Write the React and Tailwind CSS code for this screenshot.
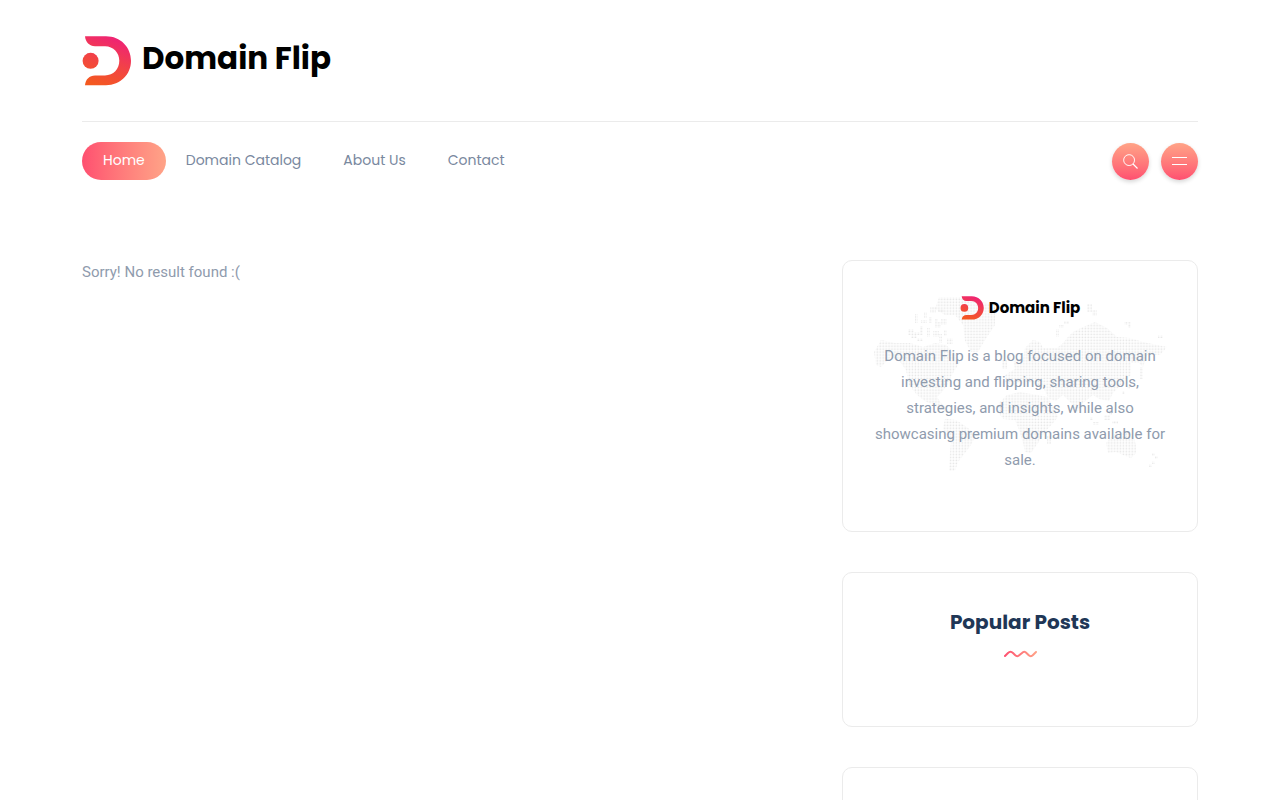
import React, { useId } from "react";

const navItems = ["Home", "Domain Catalog", "About Us", "Contact"];

function LogoMark({ className }) {
  const id = useId();
  return (
    <svg viewBox="0 0 49 50" className={className} aria-hidden="true">
      <defs>
        <linearGradient id={id} gradientUnits="userSpaceOnUse" x1="30" y1="2" x2="12" y2="49">
          <stop offset="0" stopColor="#ef2572" />
          <stop offset="0.5" stopColor="#f24444" />
          <stop offset="1" stopColor="#f4591f" />
        </linearGradient>
      </defs>
      <g fill={`url(#${id})`}>
        <circle cx="8.600" cy="24.800" r="8" />
        <path d="M3 .3H24C38.500 .3 49 11.300 49 24.800S38.500 49.200 24 49.200H3C3.500 43.200 7.500 39.400 13 39.400H23C31.500 39.400 37.300 33 37.300 24.800S31.500 10.200 23 10.200H13C7.500 10.200 3.500 6.300 3 .3Z" />
      </g>
    </svg>
  );
}

function WorldMap({ className }) {
  const id = useId();
  return (
    <svg viewBox="0 0 294 178" className={className} aria-hidden="true">
      <defs>
        <pattern id={id} width="2.930" height="2.930" patternUnits="userSpaceOnUse">
          <rect width="1.600" height="1.600" x=".6" y=".6" fill="#e6e6e6" />
        </pattern>
      </defs>
      <g fill={`url(#${id})`}>
        <path d="M1 57 8 45 22 48 37 48 50 52 62 48 73 50 82 58 87 67 80 78 73 92 68 98 64 102 68 108 74 113 72 116 52 106 44 100 36 90 33 75 28 68 18 62 8 72 3 70Z" />
        <path d="M35 34h6v3h6v-6h3v9h-6v3h-6v-3h-3ZM42 19h3v9h-3ZM51 17h3v6h-3ZM48 25h6v3h-6ZM56 22h3v6h-3ZM62 24h3v3h3v-3h6v6h-6v3h-6ZM54 33h3v9h-3ZM60 36h6v3h3v9h-3v-6h-6ZM71 35h3v6h-3ZM44 43h6v3h-6ZM74 43h6v6h-6ZM57 12h6v6h-6ZM65 14h6v3h-6Z" />
        <path d="M66 2H88L122 10 122 30 112 45 105 57 98 57 92 46 90 30 82 20 72 20 62 14Z" />
        <path d="M72 124 83 125 95 133 103 140 98 150 92 158 85 167 82 176 76 176 77 157 78 148 72 140 70 133Z" />
        <path d="M147 97 175 102 185 122 180 128 172 137 165 148 158 158 152 157 150 148 146 135 142 125 130 124 125 117 126 108 134 100ZM174 141h4v8h-4Z" />
        <path d="M152 53 160 45 167 47 170 53 184 53 190 48 194 43 200 37 210 32 222 27 234 33 244 42 257 43 270 47 294 52 287 60 274 60 270 72 266 68 258 68 258 80 248 90 240 98 236 106 226 104 220 100 210 108 204 118 198 108 190 100 183 106 176 104 170 92 160 88 150 86 140 90 132 88 132 80 142 74 140 66 150 64Z" />
        <path d="M233 148 240 140 252 136 260 140 263 150 263 158 258 163 250 160 243 157 235 158Z" />
        <path d="M183 34h3v8h-3ZM186 30h5v3h-5ZM191 26h5v3h-5ZM146 12h9v3h-9ZM149 15h6v3h-6ZM214 9h5v8h-5ZM219 15h5v6h-5ZM251 27h7v3h-7ZM255 30h3v3h-3ZM285 40h5v3h-5ZM217 122h3v3h-3ZM220 127h6v3h-6ZM231 120h6v5h-6ZM239 126h6v3h-6ZM236 115h3v5h-3ZM249 96h3v3h-3ZM254 91h3v3h-3ZM279 158h3v3h-3ZM282 161h3v3h-3ZM279 166h3v3h-3ZM276 169h3v3h-3ZM267 72h3v12h-3ZM129 65h5v9h-5ZM135 60h3v6h-3Z" />
      </g>
    </svg>
  );
}

function Squiggle() {
  return (
    <svg viewBox="0 0 33 6" className="h-[6px] w-[33px] overflow-visible" aria-hidden="true">
      <defs>
        <linearGradient id="squiggle" gradientUnits="userSpaceOnUse" x1="0" y1="0" x2="33" y2="0">
          <stop offset="0" stopColor="#fe4f70" />
          <stop offset="1" stopColor="#ffa387" />
        </linearGradient>
      </defs>
      <path
        d="M1 5 4 2Q6.500 -.5 9 2L11 4Q13.300 6.300 15.500 4L18 2Q20.300 -.5 22.500 2L24.500 4Q26.800 6.300 29 4L32 1"
        fill="none"
        stroke="url(#squiggle)"
        strokeWidth="2"
        strokeLinecap="round"
      />
    </svg>
  );
}

function RoundButton({ label, children }) {
  return (
    <button
      type="button"
      aria-label={label}
      className="flex size-[37px] items-center justify-center rounded-full bg-linear-to-t from-[#fe4f70] to-[#ffa387] text-white shadow-[0_2px_4px_rgba(0,0,0,0.16)]"
    >
      {children}
    </button>
  );
}

export default function App() {
  return (
    <div className="min-h-screen bg-white font-['Roboto',sans-serif] text-[15px] text-[#8f9bad]">
      <div className="mx-auto max-w-[1140px] px-3">
        <header>
          <div className="flex border-b border-[#ebebeb] pt-9 pb-[35px]">
            <a href="#home" className="flex items-center gap-[11px] text-black">
              <LogoMark className="h-[50px] w-[49px]" />
              <span className="pb-1.5 font-['Poppins','Inter',sans-serif] text-[31px] leading-[40px] font-bold">
                Domain Flip
              </span>
            </a>
          </div>
          <div className="flex items-center justify-between pt-5">
            <nav className="flex font-['Poppins','Inter',sans-serif] text-sm leading-[22px]">
              {navItems.map((item, i) => (
                <a
                  key={item}
                  href="#home"
                  className={
                    i === 0
                      ? "rounded-full bg-linear-to-r from-[#fe4f70] to-[#ffa387] px-[21px] pt-[7px] pb-[9px] text-white"
                      : "pt-[7px] pr-[21px] pb-[9px] pl-[21px] text-[#79889e] nth-2:pl-5"
                  }
                >
                  {item}
                </a>
              ))}
            </nav>
            <div className="flex gap-3">
              <RoundButton label="Search">
                <svg viewBox="0 0 16 16" className="size-[15px]" fill="none" stroke="currentColor" aria-hidden="true">
                  <circle cx="6.500" cy="6.500" r="5.800" />
                  <path d="M10.700 10.700 15.500 15.500" strokeWidth="1.300" />
                </svg>
              </RoundButton>
              <RoundButton label="Menu">
                <svg viewBox="0 0 15 9" className="h-[9px] w-[15px]" fill="currentColor" aria-hidden="true">
                  <path d="M0 0h15v1H0ZM0 7h15v1H0Z" />
                </svg>
              </RoundButton>
            </div>
          </div>
        </header>

        <main className="grid grid-cols-3 gap-6 pt-20">
          <section className="col-span-2">
            <p className="leading-[25px]">Sorry! No result found :(</p>
          </section>
          <aside className="flex flex-col gap-10">
            <section className="grid rounded-[10px] border border-[#ebebeb] p-[30px]">
              <WorldMap className="col-start-1 row-start-1 mt-1 w-full" />
              <div className="col-start-1 row-start-1 flex flex-col items-center pt-[5px] pb-7 text-center">
                <a href="#home" className="flex items-center gap-[5px] text-black">
                  <LogoMark className="size-[24px]" />
                  <span className="font-['Poppins','Inter',sans-serif] text-[15px] leading-[22px] font-bold">
                    Domain Flip
                  </span>
                </a>
                <p className="mt-[23px] leading-[26px]">
                  Domain Flip is a blog focused on domain investing and flipping, sharing tools, strategies, and
                  insights, while also showcasing premium domains available for sale.
                </p>
              </div>
            </section>
            <section className="flex flex-col items-center rounded-[10px] border border-[#ebebeb] px-[30px] pt-9 pb-[69px]">
              <h3 className="font-['Poppins','Inter',sans-serif] text-xl leading-[26px] font-bold text-[#203656]">
                Popular Posts
              </h3>
              <div className="pt-4">
                <Squiggle />
              </div>
            </section>
            <section className="h-40 rounded-[10px] border border-[#ebebeb]" />
          </aside>
        </main>
      </div>
    </div>
  );
}
